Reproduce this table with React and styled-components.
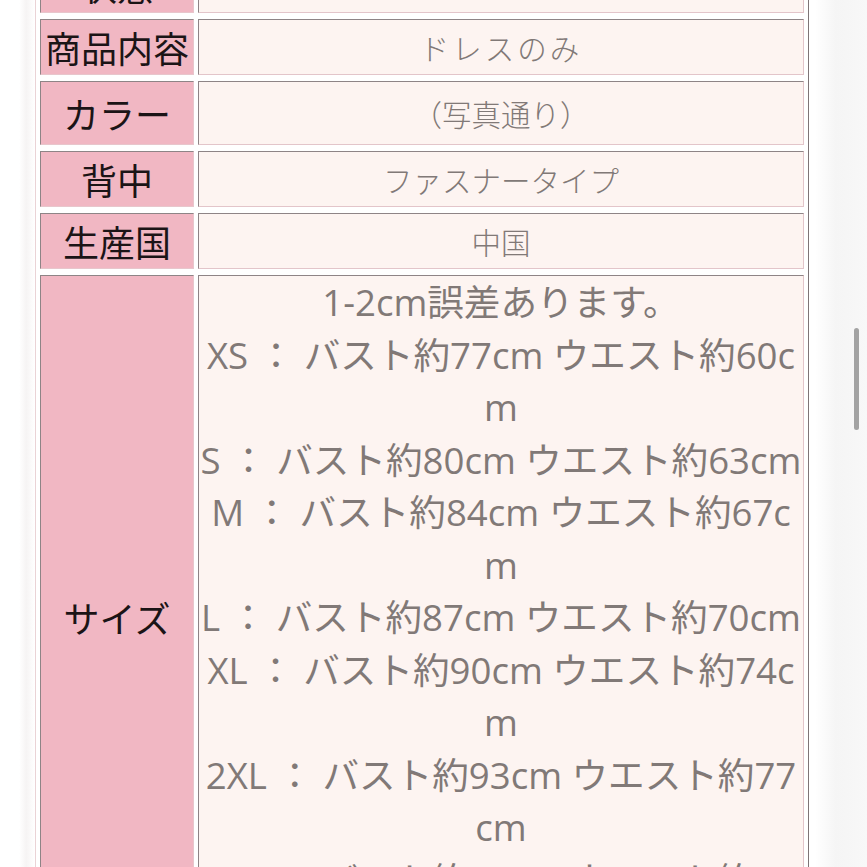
import React from 'react';
import styled, { createGlobalStyle } from 'styled-components';

const GlobalStyle = createGlobalStyle`
    html, body {
        margin: 0;
        padding: 0;
        background: #ffffff;
        overflow: hidden;
    }
`;

const Page = styled.div`
    width: 867px;
    height: 867px;
    display: flex;
    overflow: hidden;
    font-family: 'Noto Sans CJK JP', 'Noto Sans', sans-serif;
`;

const Gutter = styled.div`
    width: 35px;
    flex-shrink: 0;
    background: linear-gradient(to right, #ffffff 0%, #ffffff 55%, #f6f4f4 75%, #ffffff 100%);
`;

const Main = styled.div`
    width: 780px;
    flex-shrink: 0;
`;

const Table = styled.table`
    width: 774px;
    margin-top: -50px;
    border-collapse: separate;
    border-spacing: 4px 6px;
    border: 1px solid;
    border-color: #ead3d6 #7e7577 #7e7577 #ead3d6;
    table-layout: fixed;
`;

const Label = styled.th`
    width: 154px;
    height: ${(props) => props.h}px;
    box-sizing: border-box;
    padding: 0;
    background: #f1b7c3;
    border: 1px solid;
    border-color: #8e8486 #e8c6cc #e8c6cc #8e8486;
    color: #1b1416;
    font: 400 36px 'Noto Sans CJK JP', sans-serif;
    text-align: center;
    vertical-align: middle;
    white-space: nowrap;
`;

const Value = styled.td`
    height: ${(props) => props.h}px;
    box-sizing: border-box;
    padding: 0;
    background: #fdf4f1;
    border: 1px solid;
    border-color: #8e8486 #e3c5ca #e3c5ca #8e8486;
    color: #817977;
    font: 300 29.5px 'Open Sans', 'Noto Sans CJK JP', sans-serif;
    letter-spacing: ${(props) => props.spread || 0}px;
    text-align: center;
    vertical-align: ${(props) => (props.top ? 'top' : 'middle')};
`;

const Line = styled.div`
    font: 400 36.6px 'Open Sans', 'Noto Sans CJK JP', sans-serif;
    line-height: 52.5px;
    white-space: nowrap;
    text-align: center;
`;

const Rail = styled.div`
    flex: 1;
    background: linear-gradient(to right, #ffffff 0%, #f5f5f5 40%, #f8f8f8 100%);
    display: flex;
    justify-content: flex-end;
    padding-right: 8px;
`;

const Thumb = styled.div`
    width: 5px;
    height: 102px;
    margin-top: 328px;
    border-radius: 3px;
    background: #a3a3a3;
`;

const rows = [
    { label: '状態', value: '', h: 56 },
    { label: '商品内容', value: 'ドレスのみ', h: 56, spread: 3 },
    { label: 'カラー', value: '（写真通り）', h: 64 },
    { label: '背中', value: 'ファスナータイプ', h: 56 },
    { label: '生産国', value: '中国', h: 56 },
];

const sizeLines = [
    '1-2cm誤差あります。',
    'XS ： バスト約77cm ウエスト約60c',
    'm',
    'S ： バスト約80cm ウエスト約63cm',
    'M ： バスト約84cm ウエスト約67c',
    'm',
    'L ： バスト約87cm ウエスト約70cm',
    'XL ： バスト約90cm ウエスト約74c',
    'm',
    '2XL ： バスト約93cm ウエスト約77',
    'cm',
    '3XL ： バスト約96cm ウエスト約80',
    'cm',
];

const App = () => {
    return (
        <>
            <GlobalStyle />
            <Page>
                <Gutter />
                <Main>
                    <Table>
                        <tbody>
                            {rows.map((row) => (
                                <tr key={row.label}>
                                    <Label h={row.h}>{row.label}</Label>
                                    <Value h={row.h} spread={row.spread}>
                                        {row.value}
                                    </Value>
                                </tr>
                            ))}
                            <tr>
                                <Label>サイズ</Label>
                                <Value top>
                                    {sizeLines.map((line, i) => (
                                        <Line key={i}>{line}</Line>
                                    ))}
                                </Value>
                            </tr>
                        </tbody>
                    </Table>
                </Main>
                <Rail>
                    <Thumb />
                </Rail>
            </Page>
        </>
    );
};

export default App;
